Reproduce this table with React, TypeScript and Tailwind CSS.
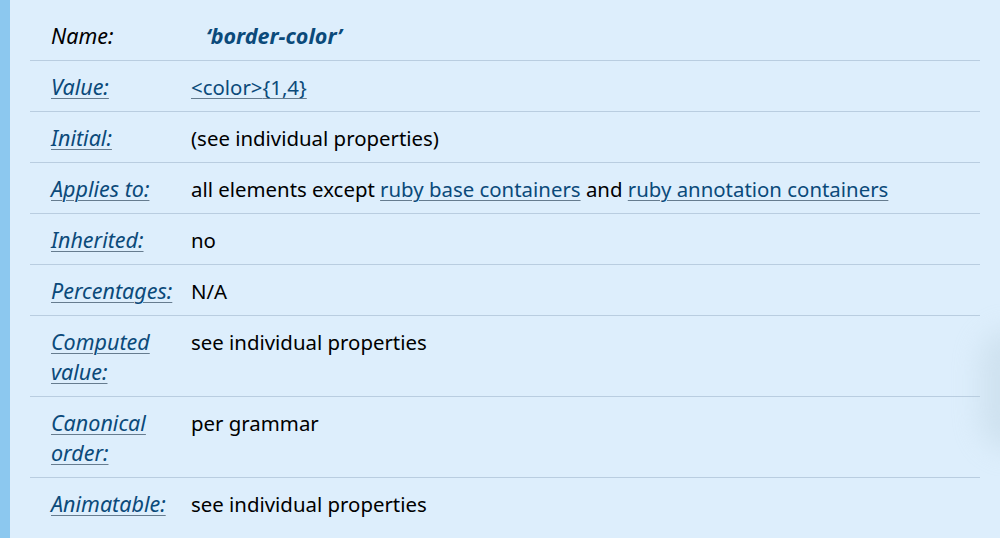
import React from "react";

type Row = { label: React.ReactNode; value: React.ReactNode };

const lnk = "text-[#0b4a7a] underline decoration-[#667c8f] decoration-1 underline-offset-[3px]";

const rows: Row[] = [
  { label: "Value:", value: <span className={lnk}>&lt;color&gt;{"{1,4}"}</span> },
  { label: "Initial:", value: "(see individual properties)" },
  {
    label: "Applies to:",
    value: (
      <>
        all elements except <span className={lnk}>ruby base containers</span> and{" "}
        <span className={lnk}>ruby annotation containers</span>
      </>
    ),
  },
  { label: "Inherited:", value: "no" },
  { label: "Percentages:", value: "N/A" },
  { label: <>Computed<br />value:</>, value: "see individual properties" },
  { label: <>Canonical<br />order:</>, value: "per grammar" },
  { label: "Animatable:", value: "see individual properties" },
];

export default function App() {
  return (
    <div className="w-[1000px] h-[538px] overflow-hidden flex bg-[#ddeefc] relative font-['Noto_Sans',sans-serif] text-[20.4px] leading-[30px] text-black">
      <div className="w-[10px] bg-[#8cc8ef] shrink-0" />
      <div className="ml-[20px] w-[950px] flex flex-col">
        <div className="flex pl-[21px] pt-[21px] pb-[9px] border-b border-[#b9cde0]">
          <div className="w-[140px] italic text-[21.5px]">Name:</div>
          <div className="pl-[15px] italic font-bold text-[21.5px] text-[#0b4a7a]">‘border-color’</div>
        </div>
        {rows.map((r, i) => (
          <div
            key={i}
            className={
              "flex pl-[21px] pt-[11px] pb-[9px] " +
              (i < rows.length - 1 ? "border-b border-[#b9cde0]" : "")
            }
          >
            <div className="w-[140px] shrink-0 italic text-[21.5px]">
              <span className={lnk}>{r.label}</span>
            </div>
            <div>{r.value}</div>
          </div>
        ))}
      </div>
      <div className="absolute right-[-40px] top-[330px] w-[60px] h-[120px] rounded-full bg-[#b9cfdc] opacity-40 blur-[14px]" />
    </div>
  );
}
